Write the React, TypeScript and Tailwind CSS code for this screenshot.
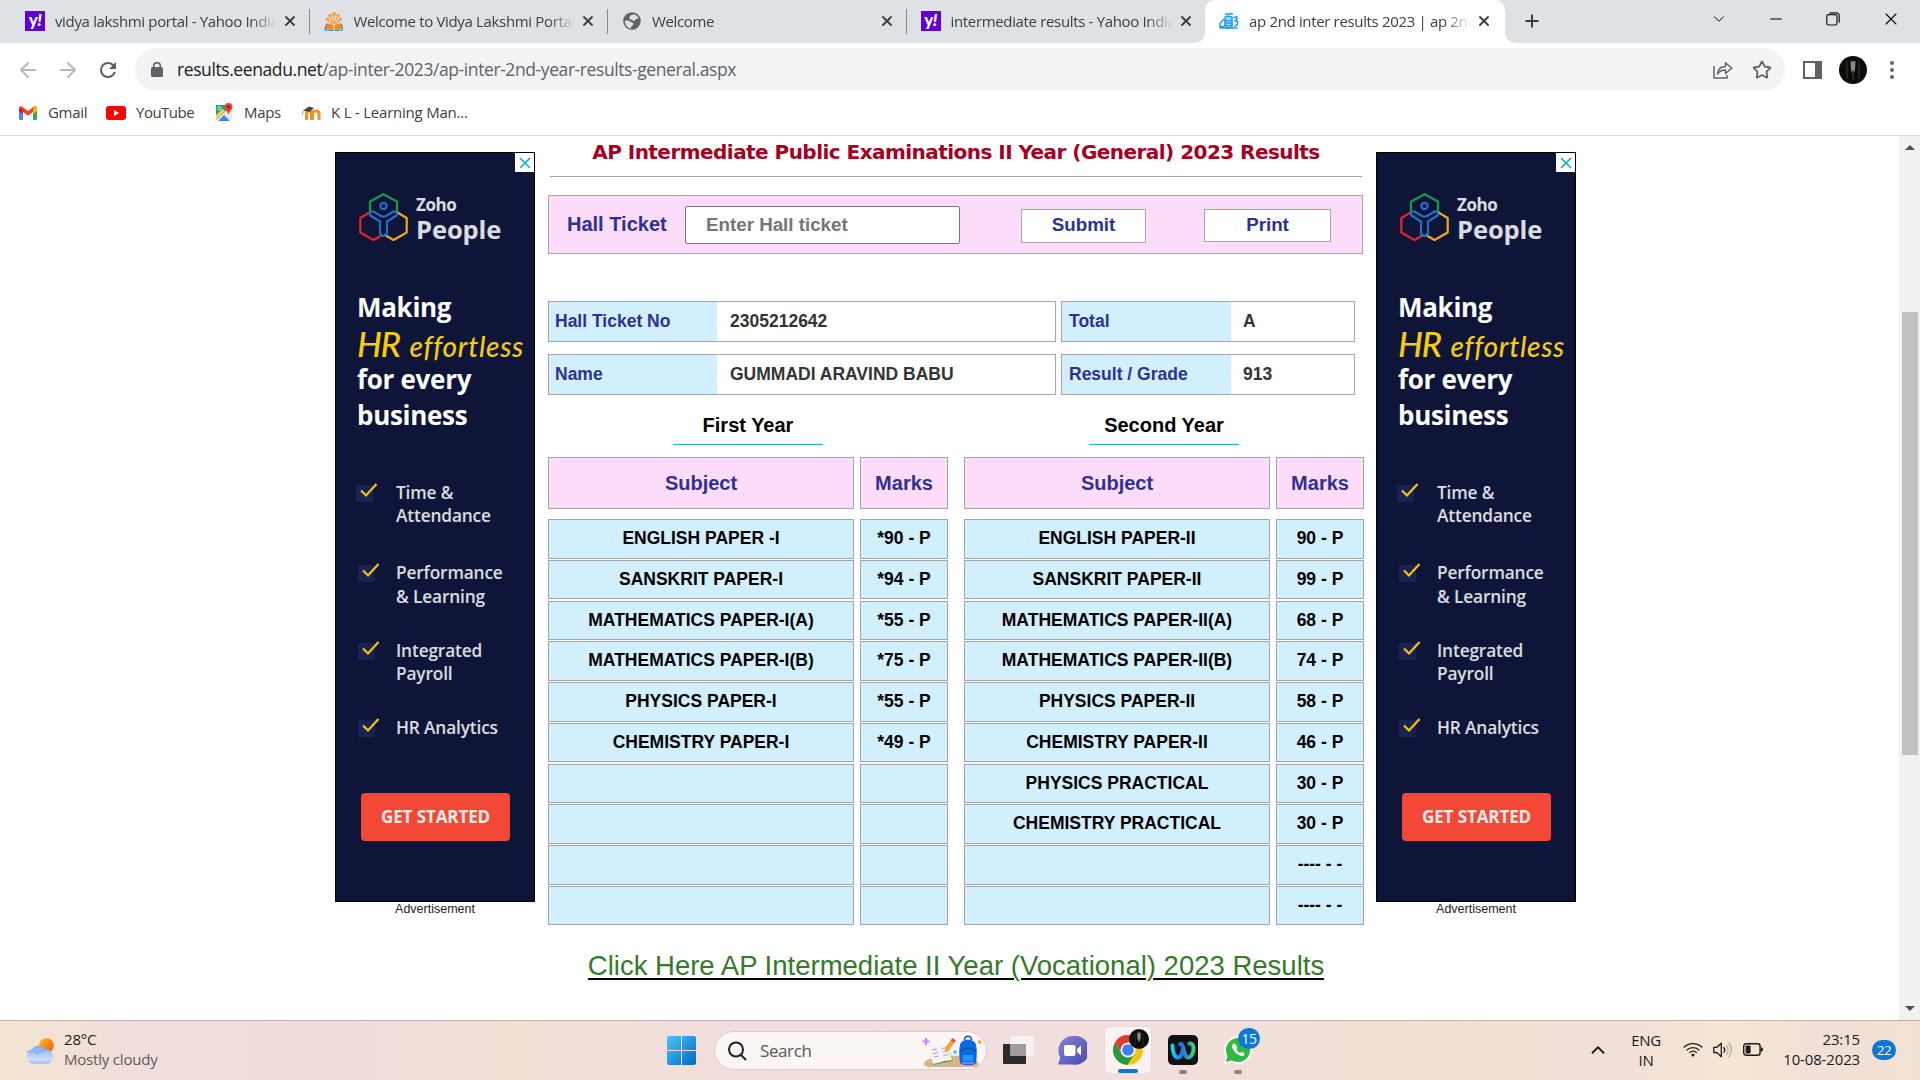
import React from "react";
import { Plus, Star, X, ChevronDown, Minus, ArrowLeft, ArrowRight, ChevronUp } from "lucide-react";

const YahooIcon = () => (
  <div className="flex h-5 w-5 items-center justify-center bg-[#5f01d1]">
    <span className="pb-[3px] font-['Lato'] text-[17px] leading-none font-black tracking-[-0.5px] text-white">
      y<i>!</i>
    </span>
  </div>
);

const VidyaIcon = () => (
  <svg viewBox="0 0 20 20" className="h-5 w-5">
    <g fill="#f6a13a">
      <circle cx="10" cy="3" r="2" />
      <circle cx="6" cy="4.6" r="1.8" />
      <circle cx="14" cy="4.6" r="1.8" />
      <circle cx="3.6" cy="8.4" r="1.8" />
      <circle cx="16.4" cy="8.4" r="1.8" />
      <path d="M10 4v9M6.4 5.6L9 12M13.6 5.6L11 12M4 9l4.4 4M16 9l-4.4 4" stroke="#f6a13a" strokeWidth="1.3" />
    </g>
    <path d="M3 12l6.5 2v5L1 18zM17 12l-6.5 2v5l8.500-1z" fill="#f28a1e" />
    <path d="M2.600 13L.8 19l8.700.6M17.400 13l1.800 6-8.700.6" fill="none" stroke="#3b93b5" strokeWidth="1.200" />
  </svg>
);

const GlobeIcon = () => (
  <svg viewBox="0 0 20 20" className="h-5 w-5">
    <circle cx="10" cy="10" r="8.800" fill="#5f6368" />
    <path d="M11 3.500c2.500-.3 5 1.700 5.600 3.800-1.400.9-3.400.5-3.600 2 0 1.200-1.700.9-2.400 0-.8-1.100-3.200-.7-3.200-2.400 0-1.900 1.700-3.100 3.600-3.400z" fill="#dee1e6" />
    <path d="M3 9.500c2.500-.2 4.500 0 5.500 1.200 1.100.8 3 .6 3 2.200 0 1.700-1.900 1.400-2.200 2.600-.2.900-.3 1.500-.5 1.900C5.300 16.800 2.700 13.500 3 9.500z" fill="#dee1e6" />
  </svg>
);

const EenaduIcon = () => (
  <svg viewBox="0 0 20 20" className="h-5 w-5" fill="none" stroke="#1b9cf2" strokeWidth="1.500" strokeLinecap="round" strokeLinejoin="round">
    <path d="M6 6.500c0-1.800 7-1.800 7 0V15c0 2.500-7 2.500-7 0z" fill="#a5dafc" />
    <path d="M6 9c1.500 1 5.500 1 7 0M6 11.500c1.500 1 5.500 1 7 0M6 14c1.500 1 5.500 1 7 0" />
    <path d="M6.500 3l2.500.6L11 2.400l2.500.6M4.500 8.500L1 12.500v3h3.500M1 17h17M15 6.500l2.700-.7.300 2.500-2 1.200 2.600 1.200-.2 3-2.700 1.500" />
  </svg>
);

const tabs = [
  { icon: <YahooIcon />, title: "vidya lakshmi portal - Yahoo India Search" },
  { icon: <VidyaIcon />, title: "Welcome to Vidya Lakshmi Portal - Stu" },
  { icon: <GlobeIcon />, title: "Welcome" },
  { icon: <YahooIcon />, title: "intermediate results - Yahoo India Sea" },
];

function TabBody({ icon, title }: { icon: React.ReactNode; title: string }) {
  return (
    <>
      {icon}
      <div className="ml-[10px] w-[222px] overflow-hidden pb-[1px] text-[15px] leading-6 tracking-[-0.34px] whitespace-nowrap text-[#3c4043] [mask-image:linear-gradient(to_right,black_88%,transparent)]">
        {title}
      </div>
      <X className="ml-[5px] h-4 w-4 text-[#3c4043]" strokeWidth={2.8} />
    </>
  );
}

function TabStrip() {
  return (
    <div className="flex h-[43px] shrink-0 bg-[#dee1e6] pl-[11px]">
      {tabs.map((t, i) => (
        <div key={i} className="flex h-[42px] w-[298.500px] items-center pl-[14px]">
          <TabBody {...t} />
          <div className={i < 3 ? "ml-[11px] h-[25px] w-px bg-[#85888d]" : "w-0"} />
        </div>
      ))}
      <div className="relative flex h-[43px] w-[300px] items-center rounded-t-[10px] bg-white pb-px pl-[14px]">
        <svg className="absolute bottom-0 -left-[10px] h-[10px] w-[10px]" viewBox="0 0 10 10">
          <path d="M10 0v10H0A10 10 0 0010 0z" fill="#fff" />
        </svg>
        <svg className="absolute -right-[10px] bottom-0 h-[10px] w-[10px]" viewBox="0 0 10 10">
          <path d="M0 0v10h10A10 10 0 010 0z" fill="#fff" />
        </svg>
        <TabBody icon={<EenaduIcon />} title="ap 2nd inter results 2023 | ap 2nd inter" />
      </div>
      <Plus className="mt-[11px] ml-[17px] h-5 w-5 text-[#3c4043]" strokeWidth={2.400} />
      <div className="ml-auto flex h-[37px] items-center text-black">
        <ChevronDown className="h-[18px] w-[18px]" strokeWidth={1.300} />
        <Minus className="ml-[39px] h-[18px] w-[18px]" strokeWidth={1.600} />
        <svg viewBox="0 0 14 14" className="ml-[41px] h-[14px] w-[14px]" fill="none" stroke="#111" strokeWidth="1.200">
          <rect x=".8" y="2.600" width="10.200" height="10.400" rx="1.800" />
          <path d="M3.400.8h7a2.800 2.800 0 012.800 2.800v7.200" />
        </svg>
        <X className="mr-[19px] ml-[41px] h-[20px] w-[20px]" strokeWidth={1.300} />
      </div>
    </div>
  );
}

function Toolbar() {
  return (
    <div className="flex h-[53px] shrink-0 items-center bg-white">
      <ArrowLeft className="ml-4 h-6 w-6 text-[#b7b9bc]" strokeWidth={2} />
      <ArrowRight className="ml-4 h-6 w-6 text-[#b7b9bc]" strokeWidth={2} />
      <svg viewBox="0 0 24 24" className="ml-4 h-6 w-6" fill="#5b5e63">
        <path d="M17.650 6.350A7.950 7.950 0 0012 4a8 8 0 107.730 10h-2.080A6 6 0 1112 6c1.660 0 3.140.69 4.220 1.780L13 11h7V4z" />
      </svg>
      <div className="ml-[15px] flex h-[43px] w-[1650px] items-center rounded-full bg-[#f1f3f4]">
        <svg viewBox="0 0 12 15" className="ml-[16px] h-[15px] w-3">
          <rect y="5" width="12" height="10" rx="1.500" fill="#5f6368" />
          <path d="M2.700 6V4a3.300 3.300 0 016.600 0v2" fill="none" stroke="#5f6368" strokeWidth="1.600" />
        </svg>
        <div className="ml-[14px] flex-1 text-[17.500px] tracking-[-0.41px] text-[#5f6368]">
          <span className="text-[#202124]">results.eenadu.net</span>/ap-inter-2023/ap-inter-2nd-year-results-general.aspx
        </div>
        <svg viewBox="0 0 20 18" className="h-[18px] w-5" fill="none" stroke="#5f6368" strokeWidth="1.500">
          <path d="M1 5v12h13v-3" />
          <path d="M4.500 13c.5-5 3.500-7.500 8-7.500V1.800L18.800 7.200 12.500 12.500V9c-3.500 0-6 1-8 4z" strokeLinejoin="round" />
        </svg>
        <Star className="mr-[13px] ml-[19px] h-5 w-5 text-[#5f6368]" strokeWidth={2.200} />
      </div>
      <div className="ml-[18px] h-[18px] w-[19px] border-[2.500px] border-r-[7px] border-[#5f6368]" />
      <svg viewBox="0 0 28 28" className="ml-[17px] h-7 w-7">
        <circle cx="14" cy="14" r="14" fill="#0b0b0a" />
        <path d="M12 4c-1 6 0 12 2 14 2-2 3-8 2-14-.8 2-3 2-4 0z" fill="#8c8980" />
        <path d="M8 5v18M20 5v18M14 15v9" stroke="#2c2b26" strokeWidth="1.500" />
      </svg>
      <div className="ml-[23px] flex flex-col gap-[3px]">
        <div className="h-1 w-1 rounded-full bg-[#5f6368]" />
        <div className="h-1 w-1 rounded-full bg-[#5f6368]" />
        <div className="h-1 w-1 rounded-full bg-[#5f6368]" />
      </div>
    </div>
  );
}

function Bookmarks() {
  return (
    <div className="flex h-[40px] shrink-0 items-center border-b border-[#d9dadc] bg-white pb-[5px] pl-[19px] text-[15px] tracking-[-0.3px] text-[#3c4043]">
      <svg viewBox="0 0 18 14" className="h-[14px] w-[18px]">
        <path d="M0 2v10.800C0 13.500.5 14 1.200 14H4V6z" fill="#4285f4" />
        <path d="M18 2v10.800c0 .7-.5 1.200-1.200 1.200H14V6z" fill="#34a853" />
        <path d="M0 2C0 .2 2 -.4 3.300.7L9 5 14.700.7C16 -.4 18 .2 18 2L14 6 9 9.800 4 6z" fill="#ea4335" />
        <path d="M0 2.200V5l4 3V4z" fill="#c5221f" />
        <path d="M14 4v4l4-3V2C18 .6 16.500 0 15.400.5z" fill="#fbbc04" />
      </svg>
      <span className="ml-[11px] w-[58px] pb-[2px]">Gmail</span>
      <svg viewBox="0 0 20 14" className="h-[14px] w-5">
        <rect width="20" height="14" rx="3" fill="#f00" />
        <path d="M8 4l5.200 3L8 10z" fill="#fff" />
      </svg>
      <span className="ml-[10px] w-[79px] pb-[2px] tracking-[-0.5px]">YouTube</span>
      <svg viewBox="0 0 18 18" className="-mt-[2px] h-[18px] w-[18px]">
        <path d="M1 2h11l2 7-7 8H1z" fill="#1fa463" />
        <path d="M1 17L14 5l3 4v8z" fill="#e7e9ea" />
        <path d="M3 18l6-6 6 6z" fill="#4285f4" />
        <path d="M1 12V17l9-9-2-2z" fill="#f9d548" />
        <circle cx="4.500" cy="5.500" r="1.700" fill="none" stroke="#fff" strokeWidth=".9" />
        <path d="M13.500 0a4 4 0 00-4 4c0 3 3.200 3.800 4 8 .8-4.200 4-5 4-8a4 4 0 00-4-4z" fill="#e94436" />
        <circle cx="13.500" cy="4" r="1.400" fill="#8c1a12" />
      </svg>
      <span className="ml-[11px] w-[57px] pb-[2px]">Maps</span>
      <svg viewBox="0 0 20 14" className="h-[14px] w-5">
        <path d="M5.500 14V7.500c0-3.500 5-3.500 5 0V14M11.500 14V7.500c0-3.500 6.500-3.500 6.500 0V14" fill="none" stroke="#f7901e" strokeWidth="3" />
        <path d="M2 4.500L8 .5l5 1.500-4.500 4z" fill="#4a4745" />
        <path d="M2.500 4.500L1 9" stroke="#8a8886" strokeWidth=".8" />
      </svg>
      <span className="ml-[10px] pb-[2px] tracking-[-0.22px]">K L - Learning Man...</span>
    </div>
  );
}

const features = [
  { lines: ["Time &", "Attendance"], cls: "mt-[48px] pl-[20px]", gap: "ml-[18px]", h: "leading-[23px] h-[46px]" },
  { lines: ["Performance", "& Learning"], cls: "mt-[34px] pl-[22px]", gap: "ml-[16px]", h: "leading-6 h-12" },
  { lines: ["Integrated", "Payroll"], cls: "mt-[30px] pl-[22px]", gap: "ml-[16px]", h: "leading-[23px] h-[46px]" },
  { lines: ["HR Analytics"], cls: "mt-[31px] pl-[22px]", gap: "ml-[16px]", h: "leading-[23px] h-[23px]" },
];

function Ad() {
  return (
    <div className="mt-4 w-[200px] shrink-0 font-['Open_Sans']">
      <div className="relative flex h-[750px] flex-col overflow-hidden border border-black bg-[#0e1538]">
        <div className="absolute top-0 right-0 flex h-[19px] w-[19px] items-center justify-center bg-white">
          <X className="h-[18px] w-[18px] text-[#12afd0]" strokeWidth={2.200} />
        </div>
        <div className="mt-[40px] ml-[23px] flex h-[52px]">
          <svg viewBox="0 0 50 50" className="h-[50px] w-[50px]" fill="none" strokeWidth="2.200" strokeLinejoin="round" strokeLinecap="round">
            <path d="M11 19V8.500L24.500 1.200 38 8.500V19" stroke="#0f9d4b" />
            <path d="M10.500 19.500L1.300 25v14.500L14.500 47l8.500-5" stroke="#e1262d" />
            <path d="M38.500 19.500L47.700 25v14.500L34.500 47 26 42" stroke="#f2a71c" />
            <circle cx="24.500" cy="13" r="3.200" stroke="#1f6fc4" />
            <path d="M11.500 22.500l9.500 6v11a3.500 3.500 0 007 0v-11l9.500-6c1.500-2-.5-5-3-4l-7.500 4.500c-1.500.8-3.500.8-5 0l-7.500-4.500c-2.500-1-4.500 2-3 4z" stroke="#1f6fc4" />
          </svg>
          <div className="ml-[7px] text-white/85">
            <div className="text-[17px] leading-[24px] font-bold tracking-[-0.4px]">Zoho</div>
            <div className="text-[25.500px] leading-[24px] font-bold tracking-[-0.1px]">People</div>
          </div>
        </div>
        <div className="mt-[44px] ml-[21px] text-[26px] leading-[36px] font-bold tracking-[-0.3px] whitespace-nowrap text-white">
          <div>Making</div>
          <div className="flex h-9 items-baseline font-['Lato'] font-medium text-[#f8cb0c] italic">
            <span className="text-[35px] tracking-[-1.500px]">HR</span>
            <span className="ml-[10px] text-[28px] tracking-[0.7px]">effortless</span>
          </div>
          <div>for every</div>
          <div>business</div>
        </div>
        {features.map((f) => (
          <div key={f.lines[0]} className={`flex ${f.cls}`}>
            <svg viewBox="0 0 22 20" className="mt-[1px] h-5 w-[22px] shrink-0 overflow-visible">
              <rect x="0" y="3" width="17" height="17" fill="#1a2252" />
              <path d="M5 8.500l5 5L20.500 2" fill="none" stroke="#f4c50f" strokeWidth="2.200" />
            </svg>
            <div className={`text-[17.300px] font-semibold tracking-[-0.15px] whitespace-nowrap text-white/85 ${f.gap} ${f.h}`}>
              {f.lines.map((l) => (
                <div key={l}>{l}</div>
              ))}
            </div>
          </div>
        ))}
        <div className="mt-[54px] ml-[25px] flex h-12 w-[149px] items-center justify-center rounded bg-[#f44837] text-[17px] font-bold tracking-[-0.1px] text-white/90">GET STARTED</div>
      </div>
      <div className="text-center font-['Liberation_Sans'] text-[12.500px] leading-[15px] text-[#222]">Advertisement</div>
    </div>
  );
}

const firstYear = [
  ["ENGLISH PAPER -I", "*90 - P"],
  ["SANSKRIT PAPER-I", "*94 - P"],
  ["MATHEMATICS PAPER-I(A)", "*55 - P"],
  ["MATHEMATICS PAPER-I(B)", "*75 - P"],
  ["PHYSICS PAPER-I", "*55 - P"],
  ["CHEMISTRY PAPER-I", "*49 - P"],
  ["", ""],
  ["", ""],
  ["", ""],
  ["", ""],
];

const secondYear = [
  ["ENGLISH PAPER-II", "90 - P"],
  ["SANSKRIT PAPER-II", "99 - P"],
  ["MATHEMATICS PAPER-II(A)", "68 - P"],
  ["MATHEMATICS PAPER-II(B)", "74 - P"],
  ["PHYSICS PAPER-II", "58 - P"],
  ["CHEMISTRY PAPER-II", "46 - P"],
  ["PHYSICS PRACTICAL", "30 - P"],
  ["CHEMISTRY PRACTICAL", "30 - P"],
  ["", "---- - -"],
  ["", "---- - -"],
];

function MarksTable({ title, rows }: { title: string; rows: string[][] }) {
  return (
    <div className="w-[400px]">
      <div className="ml-[125px] flex h-[50px] w-[150px] items-center justify-center border-b border-[#1fb4c6] pt-[10px] text-[20px] text-black">{title}</div>
      <div className="mt-3 flex gap-[6px] text-[20px] text-[#2e3192]">
        <div className="flex h-[52px] w-[306px] items-center justify-center border border-[#a5a5a5] bg-[#fddbfb]">Subject</div>
        <div className="flex h-[52px] w-[88px] items-center justify-center border border-[#a5a5a5] bg-[#fddbfb]">Marks</div>
      </div>
      <div className="mt-[10.100px] flex flex-col gap-[1.200px] text-[17.500px] leading-5 text-black">
        {rows.map(([s, m], i) => (
          <div key={i} className="flex h-[39.550px] gap-[6px]">
            <div className="w-[306px] border border-[#a5a5a5] bg-[#d2effd] pt-2 text-center">{s}</div>
            <div className="w-[88px] border border-[#a5a5a5] bg-[#d2effd] pt-2 text-center">{m}</div>
          </div>
        ))}
      </div>
    </div>
  );
}

function InfoRow({ a, b, c, d }: { a: string; b: string; c: string; d: string }) {
  return (
    <div className="flex h-[41px] gap-[5px] text-[17.500px] leading-5 text-[#333]">
      <div className="flex w-[508px] border border-[#a5a5a5]">
        <div className="flex w-[168px] items-center bg-[#d2effd] pb-[2px] pl-[6px] text-[#2e3192]">{a}</div>
        <div className="flex items-center pb-[2px] pl-[13px]">{b}</div>
      </div>
      <div className="flex w-[294px] border border-[#a5a5a5]">
        <div className="flex w-[169px] items-center bg-[#d2effd] pb-[2px] pl-[7px] text-[#2e3192]">{c}</div>
        <div className="flex items-center pb-[2px] pl-[12px]">{d}</div>
      </div>
    </div>
  );
}

function Results() {
  return (
    <div className="ml-[13px] w-[816px] shrink-0 font-['Liberation_Sans'] font-bold">
      <h1 className="mr-[2px] ml-[2px] h-[41px] border-b border-[#a5a5a5] text-center font-['DejaVu_Sans'] text-[20px] leading-[32px] tracking-[-0.540px] whitespace-nowrap text-[#a50021]">
        AP Intermediate Public Examinations II Year (General) 2023 Results
      </h1>
      <div className="mt-[18px] flex h-[59px] w-[815px] items-start border border-[#a5a5a5] bg-[#fddbfb] pl-[18px]">
        <div className="mt-[16px] w-[118px] text-[20px] leading-6 text-[#2e3192]">Hall Ticket</div>
        <input placeholder="Enter Hall ticket" className="mt-[10px] h-[38px] w-[275px] rounded-[2px] border border-[#767676] bg-white pb-[1px] pl-[20px] text-[18.750px] placeholder:text-[#757575]" />
        <button className="mt-[13px] ml-[61px] h-[34px] w-[125px] border border-[#a5a5a5] bg-white pb-[1px] text-[18.750px] text-[#2e3192]">Submit</button>
        <button className="mt-[13px] ml-[58px] h-[33px] w-[127px] border border-[#a5a5a5] bg-white text-[18.750px] text-[#2e3192]">Print</button>
      </div>
      <div className="mt-[47px] flex flex-col gap-3">
        <InfoRow a="Hall Ticket No" b="2305212642" c="Total" d="A" />
        <InfoRow a="Name" b="GUMMADI ARAVIND BABU" c="Result / Grade" d="913" />
      </div>
      <div className="flex gap-4">
        <MarksTable title="First Year" rows={firstYear} />
        <MarksTable title="Second Year" rows={secondYear} />
      </div>
      <div className="mt-[25px] text-center text-[27.500px] leading-8 font-normal whitespace-nowrap text-[#347a2a] underline decoration-black decoration-2 underline-offset-[3px]">
        Click Here AP Intermediate II Year (Vocational) 2023 Results
      </div>
    </div>
  );
}

function ScrollBar() {
  return (
    <div className="ml-auto flex w-[21px] flex-col items-center bg-[#f1f1f1]">
      <div className="mt-[9px] h-0 w-0 border-x-[5px] border-b-[5px] border-x-transparent border-b-[#505050]" />
      <div className="mt-[162px] h-[443px] w-[16px] bg-[#c1c1c1]" />
      <div className="mt-auto mb-[9px] h-0 w-0 border-x-[5px] border-t-[5px] border-x-transparent border-t-[#505050]" />
    </div>
  );
}

function Taskbar() {
  return (
    <div className="flex h-[60px] shrink-0 border-t border-[#bfb2ae] bg-[linear-gradient(90deg,#f3e4d2_0%,#efdedb_7%,#efdddb_18%,#f1e0d6_27%,#f1dedb_38%,#f2dfdd_55%,#f1dfda_65%,#f2e0d4_75%,#f2dfd9_85%,#f5e6d3_90%,#f1dfd8_95%,#f2e1d3_100%)] text-[15px] text-[#1b1b1b]">
      <svg viewBox="0 0 30 26" className="mt-[17px] ml-[25px] h-[26px] w-[30px]">
        <defs>
          <linearGradient id="sun" x1="0" y1="0" x2="1" y2="1">
            <stop stopColor="#f5bd22" />
            <stop offset="1" stopColor="#ef5a0a" />
          </linearGradient>
          <linearGradient id="cloud" x1="0" y1="0" x2="0" y2="1">
            <stop stopColor="#7fa9ee" />
            <stop offset=".8" stopColor="#cfe2fb" />
            <stop offset="1" stopColor="#8fb3ef" />
          </linearGradient>
        </defs>
        <circle cx="21.500" cy="7.500" r="7.300" fill="url(#sun)" />
        <path d="M7 25.500A6.800 6.800 0 015.500 13 9 9 0 0121 11.500a7.200 7.200 0 012.500 14z" fill="url(#cloud)" />
        <path d="M2 14.500c4-3 9-1.500 10.500 1.500 1.500-3.500 6-5 9.500-4" fill="none" stroke="#86aaf0" strokeWidth="1.500" />
      </svg>
      <div className="mt-[8px] ml-[9px] w-[603px] leading-5 tracking-[-0.2px]">
        <div>28°C</div>
        <div className="text-[#5f5a59]">Mostly cloudy</div>
      </div>
      <svg viewBox="0 0 29 29" className="mt-[15px] h-[29px] w-[29px]">
        <defs>
          <linearGradient id="win" x1="0" y1="0" x2="1" y2="1">
            <stop stopColor="#4cc6f8" />
            <stop offset="1" stopColor="#0067c6" />
          </linearGradient>
        </defs>
        <path d="M1.500 0H14v14H0V1.500zM15 0h12.500L29 1.500V14H15zM0 15h14v14H1.500L0 27.500zM15 15h14v12.500L27.500 29H15z" fill="url(#win)" />
      </svg>
      <div className="mt-[10px] ml-[18px] flex h-[39px] w-[273px] items-center rounded-full border border-[#dccbc9] bg-[#fbf5f4]">
        <svg viewBox="0 0 20 20" className="ml-[12px] h-5 w-5" fill="none" stroke="#222" strokeWidth="2" strokeLinecap="round">
          <circle cx="9" cy="8.500" r="7" />
          <path d="M14 14l4.500 4.500" />
        </svg>
        <span className="ml-[13px] flex-1 text-[17px] tracking-[-0.4px] text-[#5c5857]">Search</span>
        <svg viewBox="0 0 60 32" className="mr-[4px] h-8 w-[60px]">
          <path d="M2 28c3-5 10-5 18-6 10-2 25-2 33 2 4 3 5 6 1 8H8c-4 0-7-2-6-4z" fill="#dcb184" />
          <path d="M8 13l18-3 5 16-20 4z" fill="#58a860" />
          <path d="M6 12l9-2 3 1 8-3 4 17-8 1-3 1-8 2z" fill="#f5f1f5" />
          <path d="M10 15l5-1M11 18.500l5-1M12 22l5-1M20 13.500l5-1M21 17l5-1M21.500 20.500l5-1" stroke="#a9a4bc" strokeWidth="1" />
          <path d="M23 17l.5-5 5.500-7 3.500 2.500-5.500 8z" fill="#f3a43a" />
          <path d="M28.500 5.500l2-2.500 3.500 2.500-2 2.500z" fill="#e0524b" />
          <path d="M38 28c-1-7-1-14 0-18 1-7 15-7 16 0 1 4 1 11 0 18-1 3-15 3-16 0z" fill="#0a6be0" />
          <path d="M38 17c3-5 13-5 16 0" fill="none" stroke="#0751b4" strokeWidth="1.500" />
          <path d="M41 20h10v6H41z" fill="#2c94f7" />
          <path d="M40 28h12" stroke="#9f79f8" strokeWidth="1.800" />
          <path d="M42.500 5c0-5 7-5 7 0" stroke="#1450a8" strokeWidth="1.500" fill="none" />
          <path d="M4 3v7M.5 6.500h7" stroke="#d77ef5" strokeWidth="2.200" />
          <circle cx="33" cy="17" r="1.800" fill="#3fc4e6" />
          <circle cx="57.500" cy="7" r="1.800" fill="#f2a71c" />
        </svg>
      </div>
      <svg viewBox="0 0 31 29" className="mt-[15px] ml-4 h-[29px] w-[31px]">
        <rect y="8" width="23" height="20" rx="1" fill="#2b2b2b" />
        <rect x="7.500" width="23" height="20" rx="1" fill="#f6f4f3" />
        <rect x="7.500" y="8" width="15.500" height="12" fill="#9f9c9b" />
      </svg>
      <svg viewBox="0 0 29 29" className="mt-[15px] ml-6 h-[29px] w-[29px]">
        <defs>
          <linearGradient id="chat" x1="0" y1="0" x2="1" y2="1">
            <stop stopColor="#7f84d8" />
            <stop offset="1" stopColor="#4a48b0" />
          </linearGradient>
        </defs>
        <path d="M14.500 0A14.500 14.500 0 1114 28.500L1 28.500c-1 0-.8-1 0-2.500l1.200-4.500A14.500 14.500 0 0114.500 0z" fill="url(#chat)" />
        <rect x="6" y="9" width="11.500" height="11" rx="2" fill="#fff" />
        <path d="M19 13l4-3.500v10L19 16z" fill="#fff" />
      </svg>
      <div className="relative mt-[5px] ml-[17px] h-12 w-12 rounded-md border border-[#eadbd8] bg-[#faf3f2]">
        <svg viewBox="0 0 48 48" className="mt-[8px] ml-[8px] h-[30px] w-[30px]">
          <circle cx="24" cy="24" r="24" fill="#fbc116" />
          <path d="M3.200 12A24 24 0 0023 48l11.500-18L14 30z" fill="#229a48" />
          <path d="M3.200 12A24 24 0 0144.800 12H24L14 30z" fill="#e33b2e" />
          <circle cx="24" cy="24" r="12" fill="#fff" />
          <circle cx="24" cy="24" r="9.300" fill="#3f7ff0" />
        </svg>
        <svg viewBox="0 0 20 20" className="absolute top-[2px] right-[2px] h-5 w-5">
          <circle cx="10" cy="10" r="10" fill="#0b0b0a" />
          <path d="M8.500 3c-.8 5 0 8 1.500 10 1.500-2 2.300-5 1.500-10-.5 1-2.500 1-3 0z" fill="#8c8980" />
          <path d="M6 4v12M14 4v12" stroke="#2c2b26" />
        </svg>
        <div className="absolute bottom-0 left-[13px] h-1 w-5 rounded-full bg-[#0a78d4]" />
      </div>
      <div className="mt-[14px] ml-4 flex flex-col items-center">
        <svg viewBox="0 0 30 30" className="h-[30px] w-[30px]">
          <defs>
            <linearGradient id="wxl" x1="0" y1="0" x2="1" y2="0">
              <stop stopColor="#16d0e8" />
              <stop offset="1" stopColor="#1d63ee" />
            </linearGradient>
            <linearGradient id="wxr" x1="0" y1="0" x2="1" y2="0">
              <stop stopColor="#1d63ee" />
              <stop offset="1" stopColor="#35d67c" />
            </linearGradient>
          </defs>
          <rect width="30" height="30" rx="5" fill="#101113" />
          <path d="M4.500 10.500c0 6 2 12 5.500 12 4 0 4-6 5.500-10" fill="none" stroke="url(#wxl)" strokeWidth="4" strokeLinecap="round" />
          <path d="M12 9c4-2 3 13.500 8 13.500 3.500 0 5.500-5 5.500-9.500 0-3-1.500-5-4-4.500" fill="none" stroke="url(#wxr)" strokeWidth="4" strokeLinecap="round" />
        </svg>
        <div className="mt-[5px] h-1 w-2 rounded-full bg-[#8b817f]" />
      </div>
      <div className="relative mt-[14px] ml-[25px] flex w-[30px] flex-col items-center">
        <svg viewBox="0 0 30 30" className="h-[30px] w-[30px]">
          <path d="M15 1a14 14 0 11-6.500 26L.5 29.500 3 22A14 14 0 0115 1z" fill="#fff" />
          <circle cx="15" cy="15" r="12" fill="#2fb944" />
          <path d="M3 27l2-8 5 6z" fill="#2fb944" />
          <path d="M10.500 8.500c-3 2-.5 7 2.500 9.500s7 4.500 8.500 1.500c.6-1-2.500-3-3.300-2.300-.8.9-1.500 1-3-.4s-2-2.500-1.200-3.300c.9-.8-1.500-5.800-3.500-5z" fill="#fff" />
        </svg>
        <div className="absolute -top-[7px] left-[15px] flex h-[21px] w-[22px] items-center justify-center rounded-full bg-[#0a78d4] text-[14px] tracking-[-0.5px] text-white">15</div>
        <div className="mt-[5px] h-1 w-2 rounded-full bg-[#8b817f]" />
      </div>
      <ChevronUp className="mt-[18px] ml-[334px] h-[22px] w-[22px]" strokeWidth={2} />
      <div className="mt-[9px] ml-[7px] w-[60px] text-center leading-5 tracking-[-0.3px]">
        <div>ENG</div>
        <div>IN</div>
      </div>
      <svg viewBox="0 0 20 15" className="mt-[21px] ml-[7px] h-[15px] w-5" fill="none" stroke="#1b1b1b" strokeWidth="1.300">
        <path d="M.7 5.500a13 13 0 0118.600 0M3.600 8.200a9 9 0 0112.800 0M6.400 10.700a5 5 0 017.200 0" />
        <circle cx="10" cy="13" r="1.500" fill="#1b1b1b" stroke="none" />
      </svg>
      <svg viewBox="0 0 20 16" className="mt-[21px] ml-[10px] h-4 w-5" fill="none" stroke="#1b1b1b" strokeWidth="1.300" strokeLinejoin="round">
        <path d="M.8 5.300v5.200h3L8.300 14.700V1.200L3.800 5.300zM10.500 5.200a4 4 0 010 5.500" />
        <path d="M13 3a7 7 0 010 10M15.500.8a10.500 10.500 0 010 14.400" stroke="#b9aca8" />
      </svg>
      <svg viewBox="0 0 20 13" className="mt-[22px] ml-[10px] h-[13px] w-5">
        <rect x=".7" y=".7" width="16.400" height="11.600" rx="2.500" fill="none" stroke="#1b1b1b" strokeWidth="1.400" />
        <rect x="2.600" y="2.600" width="5" height="7.800" rx="1" fill="#1b1b1b" />
        <path d="M18 4.200c1.500.3 2 1.100 2 2.300s-.5 2-2 2.300z" fill="#1b1b1b" />
      </svg>
      <div className="mt-[8px] w-[97px] text-right leading-5 tracking-[-0.15px]">
        <div>23:15</div>
        <div>10-08-2023</div>
      </div>
      <div className="mt-[19px] ml-[12px] flex h-5 w-6 items-center justify-center rounded-full bg-[#0a78d4] text-[13.500px] tracking-[-0.5px] text-white">22</div>
    </div>
  );
}

export default function App() {
  return (
    <div className="flex h-[1080px] w-[1920px] flex-col overflow-hidden bg-white font-['Open_Sans',sans-serif]">
      <TabStrip />
      <Toolbar />
      <Bookmarks />
      <div className="flex min-h-0 flex-1 pl-[335px]">
        <Ad />
        <Results />
        <div className="w-3 shrink-0" />
        <Ad />
        <ScrollBar />
      </div>
      <Taskbar />
    </div>
  );
}
